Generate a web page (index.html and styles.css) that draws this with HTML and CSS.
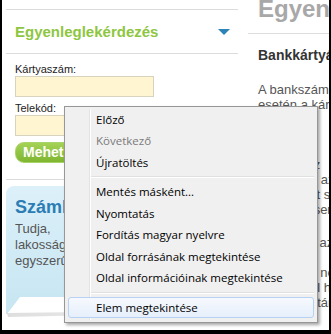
FILE: index.html
```
<!DOCTYPE html>
<html lang="hu">
<head>
<meta charset="utf-8">
<title>Egyenleglekérdezés</title>
<link rel="stylesheet" href="styles.css">
</head>
<body>
<div class="frame">
  <aside class="side">
    <section class="widget">
      <div class="widget-head">
        <span class="widget-title">Egyenleglekérdezés</span>
        <span class="caret"></span>
      </div>
      <form class="widget-form">
        <label class="lbl">Kártyaszám:</label>
        <input class="field" type="text">
        <label class="lbl lbl-2">Telekód:</label>
        <input class="field" type="text">
        <button class="go" type="button">Mehet</button>
      </form>
    </section>
    <section class="promo">
      <div class="promo-body">
        <h3 class="promo-title">Számlacsomagok</h3>
        <p class="promo-text">Tudja,<br>lakossági bankszámla<br>egyszerűen nyitható</p>
      </div>
      <svg class="promo-curl" width="232" height="20" viewBox="0 0 232 20">
        <defs>
          <linearGradient id="sh" x1="0" y1="0" x2="1" y2="0">
            <stop offset="0" stop-color="#000" stop-opacity="0.13"/>
            <stop offset="1" stop-color="#000" stop-opacity="0.03"/>
          </linearGradient>
        </defs>
        <polygon points="0,0 14,0 1,17 0,17" fill="#c9e7f3"/>
        <polygon points="1,16 232,13 232,15 2,20" fill="url(#sh)"/>
      </svg>
    </section>
  </aside>
  <main class="main">
    <h1 class="main-title">Egyenleglekérdezés</h1>
    <h2 class="main-sub">Bankkártyás egyenleglekérdezés</h2>
    <p class="main-text">A bankszámlához kapcsolódó<br>esetén a kártyához<br>díjmentes<br>online<br>mobilon<br>számlához<br>tranzakció az<br>vásárlásait s<br>kényelmesen</p>
    <p class="main-text main-text-2">interneten az<br>bármikor<br>ügyfeleink nem<br>kártyájával hívja<br>vásárlás után</p>
  </main>

  <div class="ctx">
    <div class="mi">Előző</div>
    <div class="mi mi-off">Következő</div>
    <div class="mi">Újratöltés</div>
    <div class="sep"></div>
    <div class="mi">Mentés másként...</div>
    <div class="mi">Nyomtatás</div>
    <div class="mi">Fordítás magyar nyelvre</div>
    <div class="mi">Oldal forrásának megtekintése</div>
    <div class="mi">Oldal információinak megtekintése</div>
    <div class="sep"></div>
    <div class="mi mi-hot">Elem megtekintése</div>
  </div>
</div>
</body>
</html>
```
FILE: styles.css
```
html, body {
  margin: 0;
  padding: 0;
  background: #000;
}

.frame {
  width: 327px;
  height: 330px;
  margin-left: 2px;
  background: #fff;
  position: relative;
  overflow: hidden;
  display: grid;
  grid-template-columns: 236px 81px;
  column-gap: 10px;
  align-items: start;
  font-family: "Liberation Sans", Arial, sans-serif;
}

/* ---------- left column ---------- */
.side {
  padding: 9px 0 0 4px;
}

.widget {
  border-top: 1px solid #dcdcdc;
}

.widget-head {
  height: 44px;
  box-sizing: border-box;
  display: flex;
  align-items: center;
  justify-content: space-between;
  padding: 0 8px 0 9px;
  border-bottom: 1px solid #dcdcdc;
}

.widget-title {
  font-size: 15px;
  font-weight: bold;
  color: #8dc63f;
}

.caret {
  width: 0;
  height: 0;
  border-left: 6px solid transparent;
  border-right: 6px solid transparent;
  border-top: 6px solid #2d83b7;
}

.widget-form {
  margin: 0;
  padding: 9px 0 16px 9px;
  border-bottom: 1px solid #dcdcdc;
}

.lbl {
  display: block;
  font-size: 11px;
  line-height: 13px;
  color: #222;
}

.lbl-2 {
  margin-top: 5px;
}

.field {
  display: block;
  width: 139px;
  height: 21px;
  box-sizing: border-box;
  margin: 0;
  padding: 0;
  border: 1px solid #d8d3bd;
  background: #fff5d1;
  -webkit-appearance: none;
  appearance: none;
}

.go {
  display: block;
  margin-top: 6px;
  height: 21px;
  padding: 0 20px 0 7px;
  border: 1px solid #a9d46a;
  border-radius: 9px;
  background: linear-gradient(#a4d255, #7fb631);
  color: #fff;
  font-family: "Liberation Sans", Arial, sans-serif;
  font-size: 14px;
  font-weight: bold;
  line-height: 19px;
}

.promo {
  margin-top: 6px;
  width: 232px;
}

.promo-body {
  height: 111px;
  box-sizing: border-box;
  padding: 10px 9px 0;
  border-radius: 8px 8px 0 0;
  background: linear-gradient(#dcf0f9, #c9e7f3);
  overflow: hidden;
}

.promo-title {
  margin: 0;
  font-size: 18px;
  line-height: 22px;
  font-weight: bold;
  color: #2b7db4;
  white-space: nowrap;
}

.promo-text {
  margin: 3px 0 0;
  font-size: 13px;
  line-height: 16px;
  color: #555;
  white-space: nowrap;
}

.promo-curl {
  display: block;
}

/* ---------- right column ---------- */
.main {
  min-width: 0;
}

.main-title {
  margin: 0;
  padding: 0 0 15px 10px;
  font-size: 24px;
  line-height: 18px;
  font-weight: bold;
  color: #a8a8a8;
  white-space: nowrap;
  border-bottom: 1px solid #dddddd;
}

.main-sub {
  margin: 13px 0 0 10px;
  font-size: 14px;
  line-height: 17px;
  font-weight: bold;
  color: #333;
  white-space: nowrap;
}

.main-text {
  margin: 18px 0 0 10px;
  font-size: 13px;
  line-height: 15px;
  color: #555;
  white-space: nowrap;
}

.main-text-2 {
  margin-top: 18px;
}

/* ---------- context menu ---------- */
.ctx {
  position: absolute;
  left: 62px;
  top: 106px;
  width: 254px;
  box-sizing: border-box;
  padding: 1.5px 0 4px;
  border: 1px solid #979797;
  background: #f0f0f0;
  box-shadow: 2px 2px 3px rgba(0, 0, 0, 0.35);
  font-family: "Open Sans", "Noto Sans", sans-serif;
  font-size: 11.5px;
  color: #000;
}

.ctx::before {
  content: "";
  position: absolute;
  left: 24px;
  top: 2px;
  bottom: 2px;
  width: 1px;
  background: #e2e3e3;
  box-shadow: 1px 0 0 #fff;
}

.mi {
  position: relative;
  height: 21.5px;
  line-height: 19.5px;
  box-sizing: border-box;
  margin: 0 3px;
  padding-left: 27px;
  border: 1px solid transparent;
  border-radius: 3px;
  white-space: nowrap;
}

.mi-off {
  color: #7a7a7a;
}

.mi-hot {
  border-color: #b6d1f2;
  background: linear-gradient(#f6f9fe, #e6effb);
}

.sep {
  position: relative;
  height: 8px;
}

.sep::after {
  content: "";
  position: absolute;
  left: 26px;
  right: 3px;
  top: 3px;
  height: 0;
  border-top: 1px solid #e0e0e0;
  border-bottom: 1px solid #fff;
}
```
